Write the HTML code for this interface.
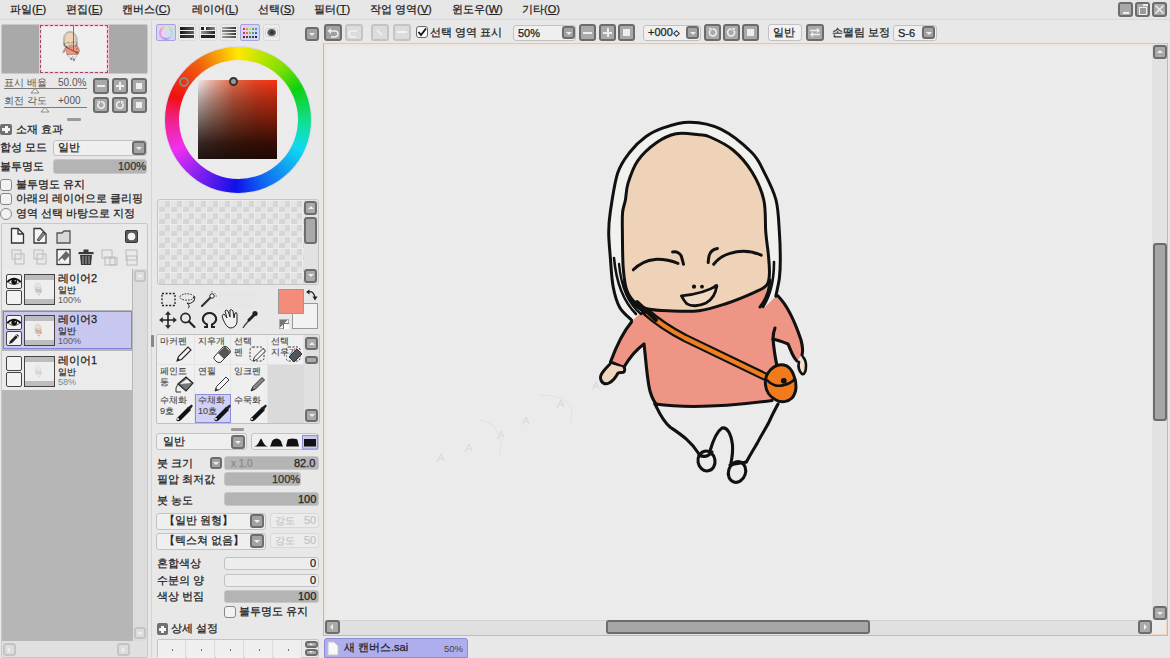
<!DOCTYPE html>
<html><head><meta charset="utf-8">
<style>
*{margin:0;padding:0;box-sizing:border-box}
html,body{width:1170px;height:658px;overflow:hidden;background:#e8e8e8;font-family:"Liberation Sans",sans-serif;color:#222;font-size:11px}
.a{position:absolute}
.t{position:absolute;white-space:nowrap;line-height:1;-webkit-text-stroke:0.25px currentColor}
.btn{position:absolute;border:2px solid #6c6c6c;border-radius:3px;background:#a9a9a9}
.btnf{position:absolute;border:2px solid #c4c4c4;border-radius:3px;background:#dcdcdc}
.inp{position:absolute;border:1px solid #c2c2c2;border-radius:3px;background:#efefef}
.bar{position:absolute;border:1px solid #c6c6c6;border-radius:3px;background:#b4b4b4}
.arr{position:absolute;border:2px solid #6c6c6c;border-radius:3px;background:#a3a3a3}
.arr:after{content:"";position:absolute;left:50%;top:50%;margin-left:-3px;margin-top:-1px;border-left:3px solid transparent;border-right:3px solid transparent;border-top:3px solid #eee}
.cb{position:absolute;width:12px;height:12px;border:1px solid #888;border-radius:3px;background:#f2f2f2}
</style></head><body>
<!-- menu bar -->
<div class="a" style="left:0;top:0;width:1170px;height:20px;background:#e6e6e6;border-bottom:1px solid #d8d8d8"></div>
<div class="t" style="left:10px;top:4px">파일(<u>F</u>)</div>
<div class="t" style="left:66px;top:4px">편집(<u>E</u>)</div>
<div class="t" style="left:122px;top:4px">캔버스(<u>C</u>)</div>
<div class="t" style="left:192px;top:4px">레이어(<u>L</u>)</div>
<div class="t" style="left:258px;top:4px">선택(<u>S</u>)</div>
<div class="t" style="left:314px;top:4px">필터(<u>T</u>)</div>
<div class="t" style="left:370px;top:4px">작업 영역(<u>V</u>)</div>
<div class="t" style="left:452px;top:4px">윈도우(<u>W</u>)</div>
<div class="t" style="left:522px;top:4px">기타(<u>O</u>)</div>

<!-- ===== LEFT PANEL ===== -->
<div class="a" style="left:151px;top:21px;width:1px;height:637px;background:#d4d4d4"></div>
<!-- navigator -->
<div class="a" style="left:1px;top:24px;width:147px;height:50px;background:#a9a9a9;border:1px solid #c8c8c8;border-radius:2px"></div>
<div class="a" style="left:40px;top:25px;width:68px;height:48px;background:#efefef;border:1.5px solid #f0c4d2;box-shadow:0 0 0 1px #f2cad6,inset 0 0 0 1px #f6dce4"></div><div class="a" style="left:40px;top:25px;width:68px;height:48px;border:1.5px dashed #9a4a68"></div>
<svg class="a" style="left:0;top:0" width="150" height="80" viewBox="0 0 150 80"><g transform="translate(40 25) scale(0.082) translate(-324 -44)"><use href="#fig"/></g></svg><div class="a" style="left:72.5px;top:25px;width:1.2px;height:26px;background:#8a4a5e;opacity:.85"></div>
<div class="t" style="left:4px;top:78px;font-size:10px;color:#555;-webkit-text-stroke:0">표시 배율</div>
<div class="t" style="left:58px;top:78px;font-size:10px;color:#555;-webkit-text-stroke:0">50.0%</div>
<div class="a" style="left:4px;top:88px;width:83px;height:1px;background:#7a7a7a"></div>
<svg class="a" style="left:30px;top:88px" width="10" height="6"><path d="M5 0.5 L9 5 L1 5 Z" fill="#f4f4f4" stroke="#888" stroke-width="1"/></svg>
<div class="t" style="left:4px;top:96px;font-size:10px;color:#555;-webkit-text-stroke:0">회전 각도</div>
<div class="t" style="left:58px;top:96px;font-size:10px;color:#555;-webkit-text-stroke:0">+000</div>
<div class="a" style="left:4px;top:107px;width:83px;height:1px;background:#7a7a7a"></div>
<svg class="a" style="left:40px;top:107px" width="10" height="6"><path d="M5 0.5 L9 5 L1 5 Z" fill="#f4f4f4" stroke="#888" stroke-width="1"/></svg>
<div class="btn" style="left:93px;top:78px;width:16px;height:16px"><div class="a" style="left:2px;top:5px;width:8px;height:2px;background:#eee"></div></div>
<div class="btn" style="left:112px;top:78px;width:16px;height:16px"><div class="a" style="left:2px;top:5px;width:8px;height:2px;background:#eee"></div><div class="a" style="left:5px;top:2px;width:2px;height:8px;background:#eee"></div></div>
<div class="btn" style="left:131px;top:78px;width:16px;height:16px"><div class="a" style="left:3px;top:3px;width:6px;height:6px;background:#eee"></div></div>
<div class="btn" style="left:93px;top:97px;width:16px;height:16px"><svg class="a" style="left:0;top:0" width="12" height="12"><path d="M3.5 4 A3.3 3.3 0 1 0 6 2.7" fill="none" stroke="#eee" stroke-width="1.6"/><path d="M2 2 L5 2 L5 5 Z" fill="#eee"/></svg></div>
<div class="btn" style="left:112px;top:97px;width:16px;height:16px"><svg class="a" style="left:0;top:0" width="12" height="12"><path d="M8.5 4 A3.3 3.3 0 1 1 6 2.7" fill="none" stroke="#eee" stroke-width="1.6"/><path d="M10 2 L7 2 L7 5 Z" fill="#eee"/></svg></div>
<div class="btn" style="left:131px;top:97px;width:16px;height:16px"><div class="a" style="left:3px;top:3px;width:6px;height:6px;background:#eee"></div></div>
<div class="a" style="left:67px;top:118px;width:14px;height:3px;border-radius:1px;background:#9a9a9a"></div>
<!-- material effects -->
<div class="a" style="left:0;top:124px;width:12px;height:11px;border-radius:2px;background:#707070"></div>
<div class="a" style="left:2px;top:128px;width:8px;height:3px;background:#f4f4f4"></div>
<div class="a" style="left:4.5px;top:126px;width:3px;height:7px;background:#f4f4f4"></div>
<div class="t" style="left:16px;top:124px">소재 효과</div>
<div class="t" style="left:0;top:142px">합성 모드</div>
<div class="inp" style="left:53px;top:140px;width:94px;height:16px"></div>
<div class="t" style="left:58px;top:142px">일반</div>
<div class="arr" style="left:132px;top:141px;width:14px;height:14px"></div>
<div class="t" style="left:0;top:161px">불투명도</div>
<div class="bar" style="left:53px;top:159px;width:94px;height:15px"></div>
<div class="t" style="left:118px;top:161px;font-size:11px;color:#333">100%</div>
<div class="cb" style="left:0;top:179px"></div>
<div class="t" style="left:16px;top:179px">불투명도 유지</div>
<div class="cb" style="left:0;top:193px"></div>
<div class="t" style="left:16px;top:193px">아래의 레이어으로 클리핑</div>
<div class="a" style="left:0;top:208px;width:12px;height:12px;border:1px solid #888;border-radius:50%;background:#f2f2f2"></div>
<div class="t" style="left:16px;top:208px">영역 선택 바탕으로 지정</div>
<!-- layer panel -->
<div class="a" style="left:1px;top:223px;width:147px;height:435px;border:1px solid #c8c8c8;border-radius:2px;background:#e9e9e9"></div>
<div class="a" style="left:2px;top:269px;width:131px;height:372px;background:#b6b6b6"></div>
<div class="a" style="left:133px;top:269px;width:14px;height:372px;background:#dcdcdc"></div>
<div class="btnf" style="left:134px;top:270px;width:12px;height:12px"><div class="a" style="left:1px;top:2px;border-left:3px solid transparent;border-right:3px solid transparent;border-bottom:3px solid #f0f0f0"></div></div>
<div class="btnf" style="left:134px;top:627px;width:12px;height:12px"><div class="a" style="left:1px;top:3px;border-left:3px solid transparent;border-right:3px solid transparent;border-top:3px solid #f0f0f0"></div></div>
<div class="a" style="left:2px;top:641px;width:145px;height:16px;background:#e0e0e0"></div>
<div class="btnf" style="left:3px;top:643px;width:13px;height:13px"><div class="a" style="left:2px;top:1.5px;border-top:3px solid transparent;border-bottom:3px solid transparent;border-right:3px solid #f0f0f0"></div></div>
<div class="btnf" style="left:117px;top:643px;width:13px;height:13px"><div class="a" style="left:3px;top:1.5px;border-top:3px solid transparent;border-bottom:3px solid transparent;border-left:3px solid #f0f0f0"></div></div>

<!-- layer icons -->
<svg class="a" style="left:8px;top:226px" width="136" height="42" viewBox="0 0 136 42">
<g fill="none" stroke="#333" stroke-width="1.3">
<path d="M3.5 2.5 H10 L15.5 8 V17 H3.5 Z" fill="#f6f6f6"/><path d="M10 2.5 V8 H15.5"/>
<path d="M26 2.5 H32.5 L38 8 V17 H26 Z" fill="#f6f6f6"/><path d="M29 14 L35 6 L37 8 L31 15 Z" fill="#888" stroke-width="0.8"/>
<path d="M49 7 H54 L56 5 H62 V17 H49 Z" fill="#d8d8d8" stroke="#555"/>
</g>
<rect x="117.5" y="4.5" width="12" height="12" rx="1" fill="#5a5a5a" stroke="#333"/>
<circle cx="123.5" cy="10.5" r="3.8" fill="#f4f4f4"/>
<g opacity="0.35" fill="none" stroke="#666" stroke-width="1">
<rect x="4" y="24" width="9" height="9"/><rect x="7" y="28" width="9" height="10"/>
<rect x="26" y="24" width="9" height="9"/><rect x="29" y="28" width="9" height="10"/>
<rect x="94" y="24" width="10" height="8"/><rect x="97" y="31" width="10" height="8"/><rect x="102" y="32" width="7" height="7"/>
<rect x="118" y="24" width="11" height="10"/><rect x="119" y="30" width="10" height="9"/>
</g>
<g>
<rect x="49" y="23.5" width="13" height="15" fill="#f4f4f4" stroke="#333" stroke-width="1.3"/>
<path d="M50 34 L58 25 L62 29 L54 38 Z" fill="#666"/>
<path d="M51 35 L54 32 L57 35 L54 38 Z" fill="#f4f4f4"/>
</g>
<g fill="#3a3a3a">
<rect x="70.5" y="26" width="15" height="2.2"/>
<rect x="75.5" y="23.5" width="5" height="2.5"/>
<path d="M72 29 H84 L83 39 H73 Z"/>
</g>
<path d="M75 30 V38 M78 30 V38 M81 30 V38" stroke="#bbb" stroke-width="0.8"/>
</svg>
<!-- layer rows -->
<div class="a" style="left:2px;top:269px;width:130px;height:41px;background:#ebebeb"></div>
<div class="a" style="left:3px;top:311px;width:129px;height:38px;background:#c7c7f0;border:1.5px solid #8484d4"></div>
<div class="a" style="left:2px;top:351px;width:130px;height:39px;background:#ebebeb"></div>
<div class="a" style="left:6px;top:274px;width:16px;height:15px;border:1.3px solid #444;border-radius:2px;background:#f2f2f2"></div><svg class="a" style="left:6px;top:274px" width="16" height="15" viewBox="0 0 16 15"><path d="M2.5 8.5 Q8 12.5 13.5 8.5" stroke="#444" stroke-width="0.9" fill="none"/><circle cx="8.2" cy="7.6" r="2.9" fill="#111"/><circle cx="9.2" cy="6.8" r="0.7" fill="#ddd"/><path d="M1.2 8.2 Q8 1.2 14.8 8.2" stroke="#111" stroke-width="1.7" fill="none"/></svg><div class="a" style="left:6px;top:290px;width:16px;height:15px;border:1.3px solid #444;border-radius:2px;background:#f2f2f2"></div><div class="a" style="left:24px;top:274px;width:31px;height:31px;border:1.3px solid #444;background:#eeeeee"></div><div class="a" style="left:25px;top:275px;width:29px;height:5px;background:#bdbdbd"></div><div class="a" style="left:25px;top:299px;width:29px;height:5px;background:#bdbdbd"></div><div class="t" style="left:58px;top:273px;font-size:11px">레이어2</div><div class="t" style="left:58px;top:286px;font-size:9px;color:#333">일반</div><div class="t" style="left:58px;top:296px;font-size:9px;color:#5a5a5a;-webkit-text-stroke:0">100%</div><svg class="a" style="left:25px;top:280px;opacity:.45;filter:grayscale(1)" width="29" height="20" viewBox="0 0 29 20"><g transform="scale(0.035) translate(-324 -44)"><use href="#fig"/></g></svg><div class="a" style="left:6px;top:315px;width:16px;height:15px;border:1.3px solid #444;border-radius:2px;background:#f2f2f2"></div><svg class="a" style="left:6px;top:315px" width="16" height="15" viewBox="0 0 16 15"><path d="M2.5 8.5 Q8 12.5 13.5 8.5" stroke="#444" stroke-width="0.9" fill="none"/><circle cx="8.2" cy="7.6" r="2.9" fill="#111"/><circle cx="9.2" cy="6.8" r="0.7" fill="#ddd"/><path d="M1.2 8.2 Q8 1.2 14.8 8.2" stroke="#111" stroke-width="1.7" fill="none"/></svg><div class="a" style="left:6px;top:331px;width:16px;height:15px;border:1.3px solid #444;border-radius:2px;background:#f2f2f2"></div><svg class="a" style="left:6px;top:331px" width="16" height="15" viewBox="0 0 16 15"><path d="M3 13 L4 10 L11 3 L13 5 L6 12 Z" fill="#222"/><path d="M10 4 L12 6" stroke="#fff" stroke-width="0.8"/></svg><div class="a" style="left:24px;top:315px;width:31px;height:31px;border:1.3px solid #444;background:#eeeeee"></div><div class="a" style="left:25px;top:316px;width:29px;height:5px;background:#bdbdbd"></div><div class="a" style="left:25px;top:340px;width:29px;height:5px;background:#bdbdbd"></div><div class="t" style="left:58px;top:314px;font-size:11px">레이어3</div><div class="t" style="left:58px;top:327px;font-size:9px;color:#333">일반</div><div class="t" style="left:58px;top:337px;font-size:9px;color:#5a5a5a;-webkit-text-stroke:0">100%</div><svg class="a" style="left:25px;top:321px;opacity:.6" width="29" height="20" viewBox="0 0 29 20"><g transform="scale(0.035) translate(-324 -44)"><use href="#fig"/></g></svg><div class="a" style="left:6px;top:356px;width:16px;height:15px;border:1.3px solid #444;border-radius:2px;background:#f2f2f2"></div><div class="a" style="left:6px;top:372px;width:16px;height:15px;border:1.3px solid #444;border-radius:2px;background:#f2f2f2"></div><div class="a" style="left:24px;top:356px;width:31px;height:31px;border:1.3px solid #444;background:#eeeeee"></div><div class="a" style="left:25px;top:357px;width:29px;height:5px;background:#bdbdbd"></div><div class="a" style="left:25px;top:381px;width:29px;height:5px;background:#bdbdbd"></div><div class="t" style="left:58px;top:355px;font-size:11px">레이어1</div><div class="t" style="left:58px;top:368px;font-size:9px;color:#333">일반</div><div class="t" style="left:58px;top:378px;font-size:9px;color:#6a8a9a;-webkit-text-stroke:0">58%</div><svg class="a" style="left:25px;top:362px;opacity:.25;filter:grayscale(1)" width="29" height="20" viewBox="0 0 29 20"><g transform="scale(0.035) translate(-324 -44)"><use href="#fig"/></g></svg>
<!-- ===== MIDDLE PANEL ===== -->
<!-- color tabs -->
<div class="a" style="left:156px;top:24px;width:20px;height:17px;border:1px solid #a8a0e0;border-radius:2px;background:#d8d4f4"></div>
<div class="a" style="left:159px;top:25.5px;width:14px;height:14px;border-radius:50%;opacity:.75;background:conic-gradient(#ee8 0deg,#8e8 60deg,#8ee 120deg,#88e 180deg,#e8e 240deg,#e88 300deg,#ee8 360deg)"></div>
<div class="a" style="left:161px;top:27.5px;width:10px;height:10px;border-radius:50%;background:#dcd8f4"></div>
<div class="a" style="left:178px;top:24px;width:18px;height:17px;border:1px solid #dadada;border-radius:2px;background:#ececec"></div>
<div class="a" style="left:180px;top:27px;width:14px;height:3px;background:linear-gradient(90deg,#111,#555)"></div>
<div class="a" style="left:180px;top:31px;width:14px;height:3px;background:linear-gradient(90deg,#111,#666)"></div>
<div class="a" style="left:180px;top:35px;width:14px;height:3px;background:linear-gradient(90deg,#222,#444)"></div>
<div class="a" style="left:199px;top:24px;width:18px;height:17px;border:1px solid #dadada;border-radius:2px;background:#ececec"></div>
<div class="a" style="left:201px;top:27px;width:3px;height:3px;background:#222"></div><div class="a" style="left:206px;top:27px;width:9px;height:3px;background:linear-gradient(90deg,#333,#888)"></div>
<div class="a" style="left:201px;top:31px;width:14px;height:3px;background:linear-gradient(90deg,#999,#222)"></div>
<div class="a" style="left:201px;top:35px;width:14px;height:3px;background:#222"></div>
<div class="a" style="left:220px;top:24px;width:18px;height:17px;border:1px solid #dadada;border-radius:2px;background:#ececec"></div>
<div class="a" style="left:222px;top:27px;width:14px;height:2px;background:linear-gradient(90deg,#aaa,#333)"></div>
<div class="a" style="left:222px;top:30px;width:14px;height:2px;background:linear-gradient(90deg,#888,#444)"></div>
<div class="a" style="left:222px;top:33px;width:14px;height:2px;background:linear-gradient(90deg,#ccc,#333)"></div>
<div class="a" style="left:222px;top:36px;width:14px;height:2px;background:linear-gradient(90deg,#999,#555)"></div>
<div class="a" style="left:240px;top:24px;width:20px;height:17px;border:1px solid #a8a0e0;border-radius:2px;background:#d8d4f4"></div>
<svg class="a" style="left:242px;top:27px" width="16" height="12" viewBox="0 0 16 12">
<g>
<rect x="1" y="1" width="2" height="2" fill="#e33"/><rect x="4" y="1" width="2" height="2" fill="#e93"/><rect x="7" y="1" width="2" height="2" fill="#dd3"/><rect x="10" y="1" width="2" height="2" fill="#3c3"/><rect x="13" y="1" width="2" height="2" fill="#39e"/>
<rect x="1" y="5" width="2" height="2" fill="#c36"/><rect x="4" y="5" width="2" height="2" fill="#c73"/><rect x="7" y="5" width="2" height="2" fill="#9b3"/><rect x="10" y="5" width="2" height="2" fill="#3a9"/><rect x="13" y="5" width="2" height="2" fill="#36c"/>
<rect x="1" y="9" width="2" height="2" fill="#622"/><rect x="4" y="9" width="2" height="2" fill="#642"/><rect x="7" y="9" width="2" height="2" fill="#462"/><rect x="10" y="9" width="2" height="2" fill="#255"/><rect x="13" y="9" width="2" height="2" fill="#226"/>
</g></svg>
<div class="a" style="left:263px;top:24px;width:17px;height:17px;border:1px solid #dadada;border-radius:2px;background:#ececec"></div>
<div class="a" style="left:265px;top:28px;width:13px;height:9px;border-radius:3px;background:#f8f8f8;border:1px solid #ccc"></div>
<div class="a" style="left:267px;top:29px;width:9px;height:7px;border-radius:50%;background:radial-gradient(circle at 55% 50%,#222,#666 60%,#ddd)"></div>
<div class="arr" style="left:305px;top:27px;width:14px;height:14px"></div>
<!-- color wheel -->
<div class="a" style="left:164px;top:45.5px;width:148px;height:148px;border-radius:50%;background:#d8d8e8"></div>
<div class="a" style="left:165px;top:46.5px;width:146px;height:146px;border-radius:50%;background:conic-gradient(#ffe800 0deg,#7ee000 40deg,#10d010 62deg,#10e0a0 95deg,#10d8f0 115deg,#1060f0 160deg,#1010e8 182deg,#8020f0 215deg,#f030f0 245deg,#f02080 272deg,#f01010 290deg,#f06010 325deg,#ffe800 360deg)"></div>
<div class="a" style="left:178.5px;top:60px;width:119px;height:119px;border-radius:50%;background:#f0e8e8"></div>
<div class="a" style="left:180px;top:61.5px;width:116px;height:116px;border-radius:50%;background:#ebebeb"></div>
<div class="a" style="left:198px;top:80px;width:79px;height:79px;background:linear-gradient(to bottom,rgba(20,5,0,0) 0%,rgba(20,5,0,.3) 25%,rgba(20,5,0,.6) 55%,rgba(20,5,0,.85) 80%,rgba(18,8,5,.95) 100%),linear-gradient(to right,#f2eaea 0%,#e8b0a0 18%,#e06848 45%,#e84020 75%,#f43410 100%)"></div>
<div class="a" style="left:179px;top:77px;width:10px;height:10px;border-radius:50%;border:2px solid #888;background:transparent"></div>
<div class="a" style="left:229px;top:76.5px;width:9px;height:9px;border-radius:50%;border:2.5px solid #333;background:#999"></div>
<!-- swatches -->
<div class="a" style="left:157px;top:199px;width:162px;height:86px;border:1px solid #c4c4c4;border-radius:3px;background-color:#e5e5e5;background-image:linear-gradient(90deg,#ececec 1px,transparent 1px),linear-gradient(#ececec 1px,transparent 1px),linear-gradient(45deg,#d6d6d6 25%,transparent 25%,transparent 75%,#d6d6d6 75%),linear-gradient(45deg,#d6d6d6 25%,transparent 25%,transparent 75%,#d6d6d6 75%);background-size:12px 12px,12px 12px,12px 12px,12px 12px;background-position:0 0,0 0,1px 1px,7px 7px"></div>
<div class="a" style="left:304px;top:200px;width:14px;height:84px;background:#e2e2e2"></div>
<div class="btn" style="left:304px;top:201px;width:13px;height:14px"><div class="a" style="left:1.5px;top:3px;border-left:3px solid transparent;border-right:3px solid transparent;border-bottom:3px solid #eee"></div></div>
<div class="btn" style="left:304px;top:217px;width:13px;height:27px"></div>
<div class="btn" style="left:304px;top:269px;width:13px;height:14px"><div class="a" style="left:1.5px;top:3px;border-left:3px solid transparent;border-right:3px solid transparent;border-top:3px solid #eee"></div></div>

<!-- tools -->
<svg class="a" style="left:157px;top:289px" width="120" height="42" viewBox="0 0 120 42">
<rect x="5" y="4.5" width="13" height="12" fill="none" stroke="#222" stroke-width="1.3" stroke-dasharray="2 1.6"/>
<ellipse cx="30" cy="8" rx="7" ry="3.2" fill="none" stroke="#222" stroke-width="1" stroke-dasharray="1.6 1.2"/>
<path d="M36 9 Q39 5 37 12 Q33 16 30 14 Q34 18 31 19" fill="none" stroke="#222" stroke-width="1"/>
<path d="M45 17 L54 8" stroke="#333" stroke-width="2.2" stroke-linecap="round"/>
<circle cx="55" cy="7" r="2.2" fill="#fff" stroke="#222" stroke-width="1"/>
<path d="M55 2 V3.5 M58.5 4 L57.5 5 M60 7 H58.5" stroke="#555" stroke-width="0.8"/>
<rect x="62" y="2" width="17" height="17" fill="#e6e6e6"/>
<rect x="80" y="2" width="18" height="17" fill="#e6e6e6"/>
<g stroke="#222" stroke-width="1.6" fill="#222">
<path d="M11 24 V38 M4 31 H18" fill="none"/>
<path d="M11 22.5 L8.5 25.5 H13.5 Z M11 39.5 L8.5 36.5 H13.5 Z M2.5 31 L5.5 28.5 V33.5 Z M19.5 31 L16.5 28.5 V33.5 Z" stroke-width="0.5"/>
</g>
<circle cx="28.5" cy="29" r="4.6" fill="none" stroke="#222" stroke-width="1.6"/>
<path d="M32 32.5 L37.5 38" stroke="#222" stroke-width="2.2" stroke-linecap="round"/>
<path d="M47 38 H50 V35.5 Q45 33 46 28.5 Q48 24 52.5 24 Q57 24 59 28.5 Q60 33 55 35.5 V38 H58" fill="none" stroke="#222" stroke-width="2"/>
<path d="M66 30 Q64 26 67 25 L70 29 L68 22 Q69 20 71 22 L73 28 L73 21 Q75 20 76 22 L77 29 L78 24 Q80 23 80 25 L80 33 Q79 39 73 39 Q69 38 66 30 Z" fill="#f0f0f0" stroke="#222" stroke-width="1"/>
<path d="M86 39 L88 36 L95 28" stroke="#444" stroke-width="1.3"/>
<path d="M92 31 L97 26" stroke="#222" stroke-width="3" stroke-linecap="round"/>
<circle cx="98" cy="24.5" r="2.6" fill="#222"/>
</svg>
<div class="a" style="left:292px;top:303px;width:26px;height:26px;border:1px solid #999;background:#f2f2f2"></div>
<div class="a" style="left:278px;top:289px;width:26px;height:25px;border:1px solid #999;background:#f48c7c"></div>
<svg class="a" style="left:305px;top:289px" width="14" height="13" viewBox="0 0 14 13"><path d="M3 3 Q8 1 10 8" fill="none" stroke="#222" stroke-width="1.3"/><path d="M1 3 L4.5 0.5 L4.5 5.5 Z M10 11.5 L7.5 7.5 L12.5 7.5 Z" fill="#222"/></svg>
<div class="a" style="left:279px;top:319px;width:10px;height:10px;border:1px solid #aaa;background:linear-gradient(135deg,#777 0 50%,#f0f0f0 50% 100%)"></div>
<div class="a" style="left:283px;top:323px;width:6px;height:6px;background:#fff;border-left:1px solid #777;border-top:1px solid #777"></div>

<!-- brush grid -->
<div class="a" style="left:151px;top:335px;width:2.5px;height:12px;background:#888;border-radius:1px"></div>
<div class="a" style="left:156px;top:334px;width:164px;height:90px;border:1px solid #c0c0c0;border-radius:2px;background:#e4e4e4"></div>
<div class="a" style="left:157px;top:335px;width:37px;height:29px;background:#efefef"></div><div class="t" style="left:160px;top:336px;font-size:9px;line-height:11px;color:#444;-webkit-text-stroke:0.1px #444">마커펜</div><div class="a" style="left:195px;top:335px;width:35px;height:29px;background:#efefef"></div><div class="t" style="left:198px;top:336px;font-size:9px;line-height:11px;color:#444;-webkit-text-stroke:0.1px #444">지우개</div><div class="a" style="left:231px;top:335px;width:36px;height:29px;background:#efefef"></div><div class="t" style="left:234px;top:336px;font-size:9px;line-height:11px;color:#444;-webkit-text-stroke:0.1px #444">선택<br>펜</div><div class="a" style="left:268px;top:335px;width:35px;height:29px;background:#efefef"></div><div class="t" style="left:271px;top:336px;font-size:9px;line-height:11px;color:#444;-webkit-text-stroke:0.1px #444">선택<br>지우개</div><div class="a" style="left:157px;top:365px;width:37px;height:29px;background:#efefef"></div><div class="t" style="left:160px;top:366px;font-size:9px;line-height:11px;color:#444;-webkit-text-stroke:0.1px #444">페인트<br>통</div><div class="a" style="left:195px;top:365px;width:35px;height:29px;background:#efefef"></div><div class="t" style="left:198px;top:366px;font-size:9px;line-height:11px;color:#444;-webkit-text-stroke:0.1px #444">연필</div><div class="a" style="left:231px;top:365px;width:36px;height:29px;background:#efefef"></div><div class="t" style="left:234px;top:366px;font-size:9px;line-height:11px;color:#444;-webkit-text-stroke:0.1px #444">잉크펜</div><div class="a" style="left:157px;top:394px;width:37px;height:29px;background:#efefef"></div><div class="t" style="left:160px;top:395px;font-size:9px;line-height:11px;color:#444;-webkit-text-stroke:0.1px #444">수채화<br>9호</div><div class="a" style="left:195px;top:394px;width:36px;height:29px;background:#d0d0f4;border:1px solid #8c8cd8"></div><div class="t" style="left:198px;top:395px;font-size:9px;line-height:11px;color:#444;-webkit-text-stroke:0.1px #444">수채화<br>10호</div><div class="a" style="left:231px;top:394px;width:36px;height:29px;background:#efefef"></div><div class="t" style="left:234px;top:395px;font-size:9px;line-height:11px;color:#444;-webkit-text-stroke:0.1px #444">수묵화</div><svg class="a" style="left:175px;top:344px" width="19" height="19" viewBox="0 0 19 19"><path d="M2 17 L3.5 12.5 L13 3 L16 6 L6.5 15.5 Z" fill="#f4f4f4" stroke="#222" stroke-width="1.1"/><path d="M2 17 L3 14 L5 16 Z" fill="#222"/></svg><svg class="a" style="left:213px;top:344px" width="19" height="19" viewBox="0 0 19 19"><path d="M1 13 L10 3 Q12 1.5 14 3 L17 6 Q18 8 16.5 9.5 L8 18 Q6 19.5 4 18 L1.5 15.5 Q0.5 14 1 13 Z" fill="#f4f4f4" stroke="#333" stroke-width="1"/><path d="M5 9 L12 2.5 L17.5 8 L11 15 Z" fill="#555"/></svg><svg class="a" style="left:249px;top:344px" width="19" height="19" viewBox="0 0 19 19"><rect x="1" y="3" width="14" height="14" rx="3" fill="none" stroke="#333" stroke-width="1" stroke-dasharray="2 1.5"/><path d="M4 17 L5.5 13 L14 4.5 L16.5 7 L8 15.5 Z" fill="#f4f4f4" stroke="#333" stroke-width="1"/></svg><svg class="a" style="left:286px;top:344px" width="19" height="19" viewBox="0 0 19 19"><rect x="0" y="3" width="14" height="14" rx="3" fill="none" stroke="#333" stroke-width="1" stroke-dasharray="2 1.5"/><path d="M3 13 L11 5 L16 10 L8 18 Z" fill="#555" stroke="#333" stroke-width="1"/></svg><svg class="a" style="left:175px;top:374px" width="19" height="19" viewBox="0 0 19 19"><path d="M3 10 L11 3 L18 9 L11 17 Z" fill="#777" stroke="#222" stroke-width="1.1"/><path d="M5 10 L12 5 L16 9" fill="#f4f4f4"/><path d="M3 10 Q0 14 1 18 H6" fill="none" stroke="#333" stroke-width="1"/></svg><svg class="a" style="left:213px;top:374px" width="19" height="19" viewBox="0 0 19 19"><path d="M2 17 L3.5 12.5 L13 3 L16 6 L6.5 15.5 Z" fill="#f4f4f4" stroke="#333" stroke-width="1"/><path d="M2 17 L3 14 L5 16 Z" fill="#333"/></svg><svg class="a" style="left:249px;top:374px" width="19" height="19" viewBox="0 0 19 19"><path d="M2 17 L4 12.5 L13 3.5 L15.5 6 L6.5 15 Z" fill="#888" stroke="#333" stroke-width="1"/><path d="M2 17 L3 14 L5 16 Z" fill="#333"/></svg><svg class="a" style="left:175px;top:403px" width="19" height="19" viewBox="0 0 19 19"><path d="M1.5 17.5 Q1 15 3 14 L13 4 L16 7 L6 17 Q4 19 1.5 17.5 Z" fill="#111"/><path d="M12 5 L16.5 1.5 Q18 2 17.5 3.5 L14.5 7.5 Z" fill="#222"/><circle cx="3" cy="16" r="1" fill="#fff"/></svg><svg class="a" style="left:213px;top:403px" width="19" height="19" viewBox="0 0 19 19"><path d="M1.5 17.5 Q1 15 3 14 L13 4 L16 7 L6 17 Q4 19 1.5 17.5 Z" fill="#111"/><path d="M12 5 L16.5 1.5 Q18 2 17.5 3.5 L14.5 7.5 Z" fill="#222"/><circle cx="3" cy="16" r="1" fill="#fff"/></svg><svg class="a" style="left:249px;top:403px" width="19" height="19" viewBox="0 0 19 19"><path d="M1.5 17.5 Q1 15 3 14 L13 4 L16 7 L6 17 Q4 19 1.5 17.5 Z" fill="#111"/><path d="M12 5 L16.5 1.5 Q18 2 17.5 3.5 L14.5 7.5 Z" fill="#222"/><circle cx="3" cy="16" r="1" fill="#fff"/></svg><div class="a" style="left:268px;top:365px;width:36px;height:58px;background:#dadada"></div><div class="a" style="left:304px;top:335px;width:15px;height:88px;background:#e0e0e0"></div><div class="btn" style="left:305px;top:337px;width:13px;height:13px"><div class="a" style="left:1.5px;top:3px;border-left:3px solid transparent;border-right:3px solid transparent;border-bottom:3px solid #eee"></div></div><div class="btn" style="left:305px;top:356px;width:13px;height:8px"></div><div class="btn" style="left:305px;top:409px;width:13px;height:13px"><div class="a" style="left:1.5px;top:3px;border-left:3px solid transparent;border-right:3px solid transparent;border-top:3px solid #eee"></div></div><div class="a" style="left:231px;top:428px;width:13px;height:3px;border-radius:1px;background:#9a9a9a"></div>
<!-- brush settings -->
<div class="inp" style="left:156px;top:433px;width:91px;height:17px"></div>
<div class="t" style="left:163px;top:436px">일반</div>
<div class="arr" style="left:231px;top:435px;width:14px;height:14px"></div>
<div class="inp" style="left:251px;top:433px;width:68px;height:17px"></div>
<svg class="a" style="left:251px;top:433px" width="68" height="17" viewBox="0 0 68 17">
<path d="M3 13.5 Q6 13 8 9 Q9.5 5.5 10 5.5 Q10.5 5.5 12 9 Q14 13 17 13.5 Z" fill="#111"/>
<path d="M19 13.5 Q20 12 21 8 Q22.5 5.5 25.5 5.5 Q28.5 5.5 30 8 Q31 12 32 13.5 Z" fill="#111"/>
<path d="M35 13.5 L36.5 7 Q37 5.5 41.5 5.5 Q46 5.5 46.5 7 L48 13.5 Z" fill="#111"/>
<rect x="51.5" y="2.5" width="15" height="13.5" fill="#c8c8f0" stroke="#8c8cd8" stroke-width="1"/>
<rect x="53" y="6" width="12" height="7.5" fill="#111"/>
</svg>
<div class="t" style="left:157px;top:458px">붓 크기</div>
<div class="arr" style="left:210px;top:457px;width:12px;height:12px"></div>
<div class="bar" style="left:224px;top:456px;width:95px;height:14px"></div>
<div class="t" style="left:231px;top:459px;font-size:10px;color:#8a8a8a">x 1.0</div>
<div class="t" style="left:294px;top:458px;font-size:11px;color:#222">82.0</div>
<div class="t" style="left:157px;top:474px">필압 최저값</div>
<div class="bar" style="left:224px;top:472px;width:77px;height:14px"></div>
<div class="t" style="left:272px;top:474px;font-size:11px;color:#333">100%</div>
<div class="t" style="left:157px;top:495px">붓 농도</div>
<div class="bar" style="left:224px;top:492px;width:95px;height:14px"></div>
<div class="t" style="left:298px;top:494px;font-size:11px;color:#222">100</div>
<div class="inp" style="left:156px;top:513px;width:110px;height:17px"></div>
<div class="t" style="left:164px;top:515px">【일반 원형】</div>
<div class="arr" style="left:250px;top:514px;width:14px;height:14px"></div>
<div class="inp" style="left:270px;top:513px;width:49px;height:15px;border-color:#d8d8d8;background:#ececec"></div>
<div class="t" style="left:275px;top:516px;font-size:10px;color:#c8c8c8">강도</div>
<div class="t" style="left:304px;top:515px;font-size:11px;color:#c4c4c4">50</div>
<div class="inp" style="left:156px;top:533px;width:110px;height:17px"></div>
<div class="t" style="left:164px;top:535px">【텍스쳐 없음】</div>
<div class="arr" style="left:250px;top:534px;width:14px;height:14px"></div>
<div class="inp" style="left:270px;top:533px;width:49px;height:15px;border-color:#d8d8d8;background:#ececec"></div>
<div class="t" style="left:275px;top:536px;font-size:10px;color:#c8c8c8">강도</div>
<div class="t" style="left:304px;top:535px;font-size:11px;color:#c4c4c4">50</div>
<div class="t" style="left:157px;top:558px">혼합색상</div>
<div class="inp" style="left:224px;top:557px;width:95px;height:13px;background:#ededed"></div>
<div class="t" style="left:310px;top:558px;font-size:11px;color:#222">0</div>
<div class="t" style="left:157px;top:575px">수분의 양</div>
<div class="inp" style="left:224px;top:574px;width:95px;height:13px;background:#ededed"></div>
<div class="t" style="left:310px;top:575px;font-size:11px;color:#222">0</div>
<div class="t" style="left:157px;top:591px">색상 번짐</div>
<div class="bar" style="left:224px;top:590px;width:95px;height:13px"></div>
<div class="t" style="left:298px;top:591px;font-size:11px;color:#222">100</div>
<div class="cb" style="left:224px;top:606px"></div>
<div class="t" style="left:239px;top:606px">불투명도 유지</div>
<div class="a" style="left:157px;top:623px;width:11px;height:12px;border-radius:2px;background:#707070"></div>
<div class="a" style="left:159px;top:627.5px;width:7px;height:3px;background:#f4f4f4"></div>
<div class="a" style="left:161px;top:625.5px;width:3px;height:7px;background:#f4f4f4"></div>
<div class="t" style="left:171px;top:623px">상세 설정</div>
<div class="a" style="left:157px;top:639px;width:162px;height:19px;border:1px solid #c4c4c4;border-radius:2px;background:#ececec"></div>
<div class="a" style="left:158px;top:640px;width:28px;height:18px;background:#efefef;border-right:1px solid #dcdcdc"></div><div class="a" style="left:172px;top:649px;width:1px;height:2px;background:#777"></div><div class="a" style="left:187px;top:640px;width:28px;height:18px;background:#efefef;border-right:1px solid #dcdcdc"></div><div class="a" style="left:201px;top:649px;width:1px;height:2px;background:#777"></div><div class="a" style="left:216px;top:640px;width:28px;height:18px;background:#efefef;border-right:1px solid #dcdcdc"></div><div class="a" style="left:230px;top:649px;width:1px;height:2px;background:#777"></div><div class="a" style="left:245px;top:640px;width:28px;height:18px;background:#efefef;border-right:1px solid #dcdcdc"></div><div class="a" style="left:259px;top:649px;width:1px;height:2px;background:#777"></div><div class="a" style="left:274px;top:640px;width:28px;height:18px;background:#efefef;border-right:1px solid #dcdcdc"></div><div class="a" style="left:288px;top:649px;width:1px;height:2px;background:#777"></div><div class="btn" style="left:305px;top:641px;width:13px;height:7px"></div><div class="btn" style="left:305px;top:649px;width:13px;height:7px"></div><div class="a" style="left:309px;top:643px;border-left:2.5px solid transparent;border-right:2.5px solid transparent;border-bottom:2.5px solid #eee"></div><div class="a" style="left:309px;top:651px;border-left:2.5px solid transparent;border-right:2.5px solid transparent;border-top:2.5px solid #eee"></div>
<!-- ===== CANVAS AREA ===== -->
<!-- window buttons -->
<div class="btn" style="left:1118px;top:2px;width:15px;height:15px"><div class="a" style="left:3px;top:8px;width:6px;height:2px;background:#eee"></div></div>
<div class="btn" style="left:1135px;top:2px;width:15px;height:15px"><div class="a" style="left:2px;top:3px;width:8px;height:8px;border:1.5px solid #eee;background:#9a9a9a"></div><div class="a" style="left:6px;top:0px;width:5px;height:1.5px;background:#eee"></div></div>
<div class="btn" style="left:1152px;top:2px;width:15px;height:15px"><svg class="a" style="left:0;top:0" width="11" height="11"><path d="M1.5 1.5 L9.5 9.5 M9.5 1.5 L1.5 9.5" stroke="#eee" stroke-width="1.4"/></svg></div>
<!-- toolbar -->
<div class="btn" style="left:324px;top:24px;width:18px;height:17px;background:#a0a0a0"><svg class="a" style="left:1px;top:1px" width="12" height="11"><path d="M3 4 H8 Q11 4 11 7 Q11 10 7 10 H4" fill="none" stroke="#eee" stroke-width="1.5"/><path d="M0.5 4 L4 1 V7 Z" fill="#eee"/></svg></div>
<div class="btnf" style="left:345px;top:24px;width:18px;height:17px"><svg class="a" style="left:1px;top:1px" width="12" height="11"><path d="M9 4 H4 Q1 4 1 7 Q1 10 5 10 H8" fill="none" stroke="#f2f2f2" stroke-width="1.5"/></svg></div>
<div class="btnf" style="left:371px;top:24px;width:18px;height:17px"><svg class="a" style="left:1px;top:1px" width="12" height="11"><path d="M3 3 L8 8" stroke="#f2f2f2" stroke-width="1.5"/></svg></div>
<div class="btnf" style="left:393px;top:24px;width:18px;height:17px"><div class="a" style="left:2px;top:5px;width:10px;height:1.5px;background:#f2f2f2"></div></div>
<div class="cb" style="left:416px;top:26px;border-color:#666;background:#f8f8f8"></div>
<svg class="a" style="left:416px;top:26px" width="12" height="12"><path d="M2.5 6 L5 9 L10 2.5" fill="none" stroke="#111" stroke-width="1.8"/></svg>
<div class="t" style="left:430px;top:27px">선택 영역 표시</div>
<div class="inp" style="left:513px;top:25px;width:63px;height:16px"></div>
<div class="t" style="left:518px;top:28px;font-size:11px;color:#222">50%</div>
<div class="arr" style="left:562px;top:26px;width:13px;height:13px"></div>
<div class="btn" style="left:579px;top:24px;width:17px;height:17px"><div class="a" style="left:2px;top:5.5px;width:9px;height:2px;background:#eee"></div></div>
<div class="btn" style="left:599px;top:24px;width:17px;height:17px"><div class="a" style="left:2px;top:5.5px;width:9px;height:2px;background:#eee"></div><div class="a" style="left:5.5px;top:2px;width:2px;height:9px;background:#eee"></div></div>
<div class="btn" style="left:618px;top:24px;width:17px;height:17px"><div class="a" style="left:3px;top:3px;width:7px;height:7px;background:#eee"></div></div>
<div class="inp" style="left:643px;top:25px;width:58px;height:16px"></div>
<div class="t" style="left:648px;top:27px;font-size:11px;color:#222">+000</div>
<div class="a" style="left:673.5px;top:30.5px;width:5px;height:5px;border:1px solid #333;transform:rotate(45deg)"></div>
<div class="arr" style="left:686px;top:26px;width:13px;height:13px"></div>
<div class="btn" style="left:704px;top:24px;width:17px;height:17px"><svg class="a" style="left:0;top:0" width="13" height="13"><path d="M4 4.5 A3.5 3.5 0 1 0 6.5 3" fill="none" stroke="#eee" stroke-width="1.6"/><path d="M2.5 2 L5.5 2 L5.5 5.5 Z" fill="#eee"/></svg></div>
<div class="btn" style="left:723px;top:24px;width:17px;height:17px"><svg class="a" style="left:0;top:0" width="13" height="13"><path d="M9 4.5 A3.5 3.5 0 1 1 6.5 3" fill="none" stroke="#eee" stroke-width="1.6"/><path d="M10.5 2 L7.5 2 L7.5 5.5 Z" fill="#eee"/></svg></div>
<div class="btn" style="left:742px;top:24px;width:17px;height:17px"><div class="a" style="left:3px;top:3px;width:7px;height:7px;background:#eee"></div></div>
<div class="inp" style="left:768px;top:24px;width:34px;height:17px;background:#f2f2f2"></div>
<div class="t" style="left:773px;top:27px">일반</div>
<div class="btn" style="left:806px;top:24px;width:18px;height:17px"><svg class="a" style="left:0;top:0" width="14" height="13"><path d="M2 4.5 H11 M9 2.5 L11 4.5 L9 6.5 M12 8.5 H3 M5 6.5 L3 8.5 L5 10.5" fill="none" stroke="#eee" stroke-width="1.3"/></svg></div>
<div class="t" style="left:832px;top:27px">손떨림 보정</div>
<div class="inp" style="left:893px;top:25px;width:44px;height:16px"></div>
<div class="t" style="left:898px;top:28px;font-size:11px;color:#222">S-6</div>
<div class="arr" style="left:922px;top:26px;width:13px;height:13px"></div>
<!-- canvas frame -->
<div class="a" style="left:323px;top:43px;width:845px;height:593px;border:1px solid #c8b8a8;border-top-color:#dcc8b4;box-shadow:inset 2px 2px 0 #f2e6da,inset -1px -1px 0 #efd8c4;background:#ebebeb"></div>

<!-- watermark -->
<svg class="a" style="left:0;top:0" width="1170" height="658" viewBox="0 0 1170 658">
<g fill="none" stroke="#d8d8d8" stroke-width="1">
<path d="M437 462 L441 454 L444 461 M439 459 L443 458"/>
<path d="M465 452 L469 444 L472 451 M467 449 L471 448"/>
<path d="M497 439 L501 431 L504 438 M499 436 L503 435"/>
<path d="M522 425 L526 417 L529 424 M524 422 L528 421"/>
<path d="M557 408 L561 400 L564 407 M559 405 L563 404"/>
<path d="M592 390 L596 382 L599 389 M594 387 L598 386"/>
<path d="M480 420 Q505 425 500 455" stroke="#e2e2e2"/>
<path d="M540 395 Q580 395 570 425" stroke="#e2e2e2"/>
</g>
</svg>
<!-- drawing -->
<svg class="a" style="left:0;top:0" width="1170" height="658" viewBox="0 0 1170 658">
<g id="fig" stroke-linecap="round" stroke-linejoin="round">
<path d="M631.5 320.0 C629.5 317.9,622.6 312.7,619.6 307.2 C616.6 301.7,614.7 294.9,613.2 287.0 C611.7 279.1,611.2 268.8,610.5 259.7 C609.8 250.6,608.7 240.3,608.7 232.4 C608.7 224.5,608.8 221.9,610.3 212.0 C611.8 202.1,614.4 183.0,617.7 173.0 C621.0 163.0,625.4 158.0,630.0 152.0 C634.6 146.0,639.8 141.1,645.4 137.0 C651.0 132.9,656.4 130.2,663.8 127.7 C671.2 125.2,680.5 122.0,690.0 122.3 C699.5 122.5,710.5 124.2,720.8 129.2 C731.0 134.2,744.3 145.2,751.5 152.3 C758.7 159.4,759.7 163.6,763.8 171.5 C767.9 179.4,773.4 189.8,776.0 200.0 C778.6 210.2,778.7 222.5,779.4 232.4 C780.1 242.3,780.3 252.1,780.3 259.7 C780.3 267.3,780.1 271.9,779.4 278.0 C778.6 284.1,776.4 293.2,775.8 296.2 L700 305 Z" fill="#f1f1ee"/>
<path d="M632 321 C625 330,617 345,611 362 L624 367.5 C630 356,638 348,644 344 C646 360,647 380,650 391 C652 398,655 403,657 405 C680 407,720 407,772 401 C770 390,772 375,776 364 C774 355,773 345,773 339 C780 341,786 343,788 344 C791 350,792 356,797 361 L802 355 C801 340,797 325,791 314 C786 304,780 298,776 296 L764 308 L767 284 L700 297 L648 306 Z" fill="#ef9585"/>
<ellipse cx="706.5" cy="461" rx="8.5" ry="10" transform="rotate(-10 706.5 461)" fill="none" stroke="#111" stroke-width="3.1"/>
<ellipse cx="737" cy="472" rx="8.5" ry="10.5" transform="rotate(18 737 472)" fill="none" stroke="#111" stroke-width="3.1"/>
<g fill="none" stroke="#111" stroke-width="3.1">
<path d="M655 404 C658 410,662 420,670 427 C680 434,690 440,699 454"/>
<path d="M710 451 C712 444,716 432,722 428 C727 427,731 433,732.5 445 C733 452,732 458,731 463"/>
<path d="M746.4 462 C750 455,755 447,757 443.6 C762 434,766 428,769 422 C773 413,776 408,778 404"/>
<path d="M730 465 C736 463,742 463,746 462"/>
<path d="M699 455 C703 457,708 457,712 452"/>
</g>
<path d="M648.0 309.0 C642.8 307.9,640.5 307.5,637.0 304.5 C633.5 301.5,629.3 296.7,627.0 290.8 C624.7 284.9,624.1 278.6,623.3 268.9 C622.5 259.2,622.5 241.8,622.4 232.4 C622.3 223.0,622.1 217.7,622.6 212.3 C623.1 206.9,624.5 204.8,625.4 200.0 C626.3 195.2,626.0 189.9,628.0 183.4 C630.0 176.9,633.0 167.5,637.7 160.8 C642.4 154.1,649.6 147.5,656.0 143.0 C662.4 138.5,668.8 135.2,676.0 133.8 C683.2 132.4,693.3 134.3,699.0 134.8 C704.7 135.3,704.3 134.5,710.0 137.0 C715.7 139.5,726.0 144.2,733.0 150.0 C740.0 155.8,746.9 163.7,752.0 172.0 C757.1 180.3,761.5 189.9,763.8 200.0 C766.1 210.1,765.0 223.1,765.8 232.4 C766.6 241.7,767.9 249.0,768.5 256.0 C769.1 263.0,769.7 269.4,769.4 274.3 C769.1 279.2,769.2 282.2,766.6 285.3 C764.0 288.4,760.6 289.6,753.9 292.6 C747.2 295.6,735.6 300.5,726.5 303.5 C717.4 306.5,708.8 309.6,699.0 310.8 C689.2 312.0,676.5 311.1,668.0 310.8 C659.5 310.5,653.2 310.1,648.0 309.0 Z" fill="#eed3b8" stroke="#111" stroke-width="3"/>
<path d="M631.5 320.0 C629.5 317.9,622.6 312.7,619.6 307.2 C616.6 301.7,614.7 294.9,613.2 287.0 C611.7 279.1,611.2 268.8,610.5 259.7 C609.8 250.6,608.7 240.3,608.7 232.4 C608.7 224.5,608.8 221.9,610.3 212.0 C611.8 202.1,614.4 183.0,617.7 173.0 C621.0 163.0,625.4 158.0,630.0 152.0 C634.6 146.0,639.8 141.1,645.4 137.0 C651.0 132.9,656.4 130.2,663.8 127.7 C671.2 125.2,680.5 122.0,690.0 122.3 C699.5 122.5,710.5 124.2,720.8 129.2 C731.0 134.2,744.3 145.2,751.5 152.3 C758.7 159.4,759.7 163.6,763.8 171.5 C767.9 179.4,773.4 189.8,776.0 200.0 C778.6 210.2,778.7 222.5,779.4 232.4 C780.1 242.3,780.3 252.1,780.3 259.7 C780.3 267.3,780.1 271.9,779.4 278.0 C778.6 284.1,776.4 293.2,775.8 296.2" fill="none" stroke="#111" stroke-width="3"/>
<g fill="none" stroke="#111" stroke-width="2">
<path d="M614 258 C616 280,622 300,636 314" stroke-width="2.6"/>
<path d="M619 264 C621 285,627 303,641 314" stroke-width="2.4"/>
<path d="M623 282 C626 296,631 305,646 313" stroke-width="2.4"/>
<path d="M774 262 C774 280,770 296,763 307" stroke-width="2.6"/>
<path d="M770 280 C769 292,766 300,760 307" stroke-width="3"/>
</g>
<g fill="none" stroke="#111" stroke-width="3.1">
<path d="M631.5 322 C624 331,616 347,610.5 362"/>
<path d="M610.5 362 L624 367.5"/>
<path d="M624 367 C630 357,637 349,644 344 C646 360,647 380,650 391 C652 398,655 403,657 405"/>
<path d="M655 404 C680 407.5,720 407.5,772 400.5"/>
<path d="M778 296 C786 304,795 322,801 340 C803 348,803 352,802 355"/>
<path d="M775 328 C773 333,773 337,773 339 C780 341,786 343,788 344 C791 350,792 356,797 361"/>
<path d="M773 339 C774 350,775 357,777 366"/>
</g>
<path d="M610 364 C605 369,600 374,600.5 378 C601 383,605 385,609 383 C613 381,616 377,618 373 C620 372,623 373,624 372 C625 370,624.5 368,624 367.5" fill="#f0d6be" stroke="#111" stroke-width="2.9"/>
<path d="M799 362 C798 366,799 371,802 374 C805 375,806 370,806 366 C806 362,805 359,803 357" fill="#f2e0cc" stroke="#111" stroke-width="2.6"/>
<path d="M645 311 Q662 326,685 338 L768 378" fill="none" stroke="#111" stroke-width="8.5"/>
<path d="M648 313.5 Q662 326,685 338 L768 378" fill="none" stroke="#ee7e22" stroke-width="4.2"/>
<path d="M637 302 L656 320" stroke="#111" stroke-width="4"/>
<path d="M768 373 C772 367,778 364,784 365 C789 366,792 370,794 376 C797 383,797 392,792 398 C788 402,781 403,776 400 C770 397,766 391,765.5 385 C765 380,766 376,768 373 Z" fill="#f07a1c" stroke="#111" stroke-width="3"/>
<path d="M767.5 380.5 C771 385,778 387,784 385 C789 384,792 382,795 379" fill="none" stroke="#111" stroke-width="2.6"/>
<circle cx="783.8" cy="380.8" r="2.9" fill="#111"/>
<g fill="none" stroke="#111" stroke-width="3">
<path d="M633.3 269.8 C640 263,648 260,655 259.4 C664 259,672 261,678 263.4"/>
<path d="M672.6 252 C677 251,681 254,681.5 257 C682.5 260,683 262,683.5 264.3"/>
<path d="M713.7 264.3 C718 259,724 255,730 253.4 C740 250,752 251,761.2 255.2"/>
<path d="M717.4 248.4 C713 249,710 252,709 256 C708.5 259,708.2 261,708.2 262.5"/>
</g>
<circle cx="694" cy="286.7" r="2.1" fill="#111"/>
<circle cx="702" cy="286.7" r="1.9" fill="#111"/>
<path d="M681.4 295.9 C690 295,705 293,716.7 285.6 C716 292,713 299,706 303 C699 306.5,691 306.5,687 303.9 C684 301,682.5 298,681.4 295.9 Z" fill="#f1dac4" stroke="#111" stroke-width="2.8"/>
<circle cx="716" cy="286.5" r="2.2" fill="#111"/>
</g>
</svg>
<!-- v scrollbar -->
<div class="a" style="left:1152px;top:44px;width:15px;height:576px;background:#e2e2e2"></div>
<div class="btn" style="left:1153px;top:45px;width:14px;height:14px"><div class="a" style="left:2px;top:3px;border-left:3px solid transparent;border-right:3px solid transparent;border-bottom:3px solid #eee"></div></div>
<div class="btn" style="left:1153px;top:243px;width:14px;height:178px;background:#a6a6a6"></div>
<div class="btn" style="left:1153px;top:606px;width:14px;height:14px"><div class="a" style="left:2px;top:3.5px;border-left:3px solid transparent;border-right:3px solid transparent;border-top:3px solid #eee"></div></div>
<!-- h scrollbar -->
<div class="a" style="left:324px;top:620px;width:828px;height:15px;background:#e0e0e0;border-top:1px solid #d4d4d4"></div>
<div class="btn" style="left:325px;top:620px;width:15px;height:14px"><div class="a" style="left:3px;top:2px;border-top:3px solid transparent;border-bottom:3px solid transparent;border-right:3px solid #eee"></div></div>
<div class="btn" style="left:606px;top:620px;width:264px;height:14px;background:#a6a6a6"></div>
<div class="btn" style="left:1138px;top:620px;width:14px;height:14px"><div class="a" style="left:4px;top:2px;border-top:3px solid transparent;border-bottom:3px solid transparent;border-left:3px solid #eee"></div></div>
<!-- tab -->
<div class="a" style="left:324px;top:638px;width:144px;height:20px;border:1px solid #8c8cd8;border-radius:3px 3px 0 0;background:#aeaeee"></div>
<svg class="a" style="left:327px;top:641px" width="12" height="15"><path d="M1 1 H7 L11 5 V14 H1 Z" fill="#f8f8f8" stroke="#c8c8c8" stroke-width="1"/></svg>
<div class="t" style="left:344px;top:642px;color:#222">새 캔버스.sai</div>
<div class="t" style="left:444px;top:644px;font-size:9.5px;color:#444;-webkit-text-stroke:0">50%</div>
</body></html>
